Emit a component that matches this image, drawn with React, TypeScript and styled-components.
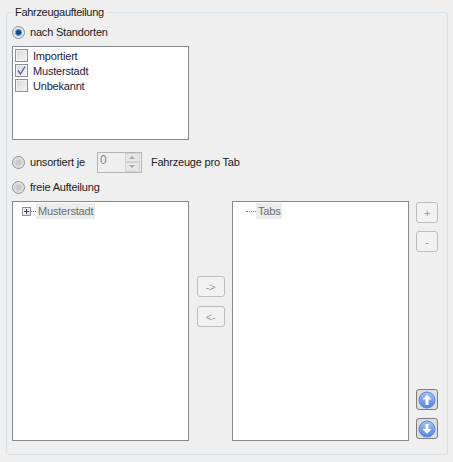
import React from "react";
import styled, { createGlobalStyle } from "styled-components";

const GlobalStyle = createGlobalStyle`
  html, body {
    margin: 0;
    padding: 0;
    background: #efefef;
  }
  body {
    font-family: "Liberation Sans", Arial, sans-serif;
    font-size: 11px;
    letter-spacing: -0.2px;
    color: #1a1a1a;
  }
`;

const Page = styled.div`
  width: 453px;
  height: 462px;
  box-sizing: border-box;
  padding: 5px 5px 7px 6px;
  overflow: hidden;
`;

const Group = styled.fieldset`
  height: 100%;
  box-sizing: border-box;
  margin: 0;
  padding: 0 5px;
  border: 1px solid #d9e2e9;
  border-radius: 3px;
  min-width: 0;
`;

const Legend = styled.legend`
  margin-left: 0;
  padding: 0 3px;
  line-height: 14px;
  letter-spacing: -0.3px;
  color: #222;
`;

const RadioRow = styled.div<{ $top: number }>`
  display: flex;
  align-items: center;
  height: 20px;
  margin-top: ${(p) => p.$top}px;
`;

const RadioDot = styled.span<{ $checked?: boolean }>`
  width: 13px;
  height: 13px;
  box-sizing: border-box;
  border-radius: 50%;
  border: 1px solid #8c8f94;
  background: ${(p) =>
    p.$checked
      ? "radial-gradient(circle, #0b4f8a 0 2px, #4d9bd6 3px, #dfe3e8 4px, #eceef0 100%)"
      : "radial-gradient(circle, #c9c9c9 0 2px, #dcdcdc 4px, #f2f2f2 100%)"};
  margin-right: 5px;
  flex: none;
`;

const ListBox = styled.div`
  width: 177px;
  height: 94px;
  box-sizing: border-box;
  margin-top: 4px;
  padding: 1px 2px;
  background: #fff;
  border: 1px solid #85888d;
`;

const CheckRow = styled.div`
  display: flex;
  align-items: center;
  height: 15px;
  color: #1c1c3a;
`;

const CheckBox = styled.span`
  width: 13px;
  height: 13px;
  box-sizing: border-box;
  margin-right: 5px;
  border: 1px solid #8e8f8f;
  background: linear-gradient(135deg, #d6d6d6, #f6f6f6);
  box-shadow: inset 0 0 0 1px #f2f2f2;
  display: flex;
  flex: none;
`;

const Spinner = styled.div`
  width: 45px;
  height: 21px;
  box-sizing: border-box;
  margin: 0 9px 0 12px;
  border: 1px solid #b4b4b4;
  display: flex;
  justify-content: space-between;
  padding: 0 1px 0 2px;
`;

const SpinValue = styled.span`
  color: #6d87a8;
  font-size: 12px;
  line-height: 14px;
`;

const SpinButtons = styled.div`
  width: 15px;
  display: flex;
  flex-direction: column;
`;

const SpinButton = styled.span<{ $down?: boolean }>`
  flex: 1;
  display: flex;
  align-items: center;
  justify-content: center;
  background: #e6e6e6;
  border: 1px solid #d2d2d2;
  &::after {
    content: "";
    border-left: 3px solid transparent;
    border-right: 3px solid transparent;
    ${(p) => (p.$down ? "border-top: 3px solid #a8a8a8;" : "border-bottom: 3px solid #a8a8a8;")}
  }
`;

const Columns = styled.div`
  display: grid;
  grid-template-columns: 177px 43px 177px 29px;
  height: 240px;
  margin-top: 4px;
`;

const TreeBox = styled.div`
  box-sizing: border-box;
  background: #fff;
  border: 1px solid #85888d;
  padding: 1px 0 0 9px;
`;

const TreeRow = styled.div<{ $indent?: number }>`
  display: flex;
  align-items: center;
  height: 16px;
  padding-left: ${(p) => p.$indent ?? 0}px;
`;

const Expander = styled.span`
  width: 9px;
  height: 9px;
  box-sizing: border-box;
  border: 1px solid #8f8f8f;
  background: linear-gradient(135deg, #fff, #dcdcdc);
  position: relative;
  flex: none;
  &::before {
    content: "";
    position: absolute;
    left: 1px;
    top: 3px;
    width: 5px;
    height: 1px;
    background: #2b3f78;
  }
  &::after {
    content: "";
    position: absolute;
    left: 3px;
    top: 1px;
    width: 1px;
    height: 5px;
    background: #2b3f78;
  }
`;

const TreeDots = styled.span<{ $width: number }>`
  width: ${(p) => p.$width}px;
  border-top: 1px dotted #808080;
  flex: none;
`;

const TreeLabel = styled.span`
  background: #ececec;
  color: #6d6d6d;
  padding: 0 2px;
  line-height: 16px;
`;

const MoveColumn = styled.div`
  display: flex;
  flex-direction: column;
  align-items: center;
  gap: 9px;
  padding-top: 75px;
`;

const SideColumn = styled.div`
  display: flex;
  flex-direction: column;
  align-items: flex-end;
  height: 100%;
  box-sizing: border-box;
  padding: 1px 0 2px;
  gap: 8px;
`;

const FlatButton = styled.span<{ $w: number }>`
  width: ${(p) => p.$w}px;
  height: 21px;
  box-sizing: border-box;
  border: 1px solid #bdbdbd;
  border-radius: 3px;
  background: #f2f2f2;
  color: #9a9a9a;
  display: flex;
  align-items: center;
  justify-content: center;
`;

const SideGap = styled.div`
  flex: 1;
`;

const IconButton = styled.span`
  width: 22px;
  height: 21px;
  box-sizing: border-box;
  border: 1px solid #7d7d7d;
  border-radius: 3px;
  background: #dedede;
  display: flex;
  align-items: center;
  justify-content: center;
`;

const Tick = () => (
  <svg width="11" height="11" viewBox="0 0 11 11">
    <path d="M2 5.5 L4.5 9 L9 1.5" fill="none" stroke="#5a66a3" strokeWidth="1.4" />
  </svg>
);

const ArrowDisc = ({ down }: { down?: boolean }) => (
  <svg width="18" height="18" viewBox="0 0 18 18">
    <defs>
      <linearGradient id={down ? "discD" : "discU"} x1="0" y1="0" x2="0" y2="1">
        <stop offset="0" stopColor="#a4c4f5" />
        <stop offset="1" stopColor="#4a84e4" />
      </linearGradient>
    </defs>
    <circle cx="9" cy="9" r="8" fill={`url(#${down ? "discD" : "discU"})`} stroke="#5b8ad8" strokeWidth="1" />
    <path
      d={down ? "M7.5 4 H10.5 V9 H13.5 L9 14 L4.5 9 H7.5 Z" : "M9 3.5 L13.5 8.5 H10.5 V14 H7.5 V8.5 H4.5 Z"}
      fill="#fff"
    />
  </svg>
);

export default function App() {
  return (
    <Page>
      <GlobalStyle />
      <Group>
        <Legend>Fahrzeugaufteilung</Legend>
        <RadioRow $top={3}>
          <RadioDot $checked />
          nach Standorten
        </RadioRow>
        <ListBox>
          <CheckRow>
            <CheckBox />
            Importiert
          </CheckRow>
          <CheckRow>
            <CheckBox>
              <Tick />
            </CheckBox>
            Musterstadt
          </CheckRow>
          <CheckRow>
            <CheckBox />
            Unbekannt
          </CheckRow>
        </ListBox>
        <RadioRow $top={12}>
          <RadioDot />
          unsortiert je
          <Spinner>
            <SpinValue>0</SpinValue>
            <SpinButtons>
              <SpinButton />
              <SpinButton $down />
            </SpinButtons>
          </Spinner>
          Fahrzeuge pro Tab
        </RadioRow>
        <RadioRow $top={5}>
          <RadioDot />
          freie Aufteilung
        </RadioRow>
        <Columns>
          <TreeBox>
            <TreeRow>
              <Expander />
              <TreeDots $width={5} />
              <TreeLabel>Musterstadt</TreeLabel>
            </TreeRow>
          </TreeBox>
          <MoveColumn>
            <FlatButton $w={28}>-&gt;</FlatButton>
            <FlatButton $w={28}>&lt;-</FlatButton>
          </MoveColumn>
          <TreeBox>
            <TreeRow $indent={4}>
              <TreeDots $width={10} />
              <TreeLabel>Tabs</TreeLabel>
            </TreeRow>
          </TreeBox>
          <SideColumn>
            <FlatButton $w={22}>+</FlatButton>
            <FlatButton $w={22}>-</FlatButton>
            <SideGap />
            <IconButton>
              <ArrowDisc />
            </IconButton>
            <IconButton>
              <ArrowDisc down />
            </IconButton>
          </SideColumn>
        </Columns>
      </Group>
    </Page>
  );
}
